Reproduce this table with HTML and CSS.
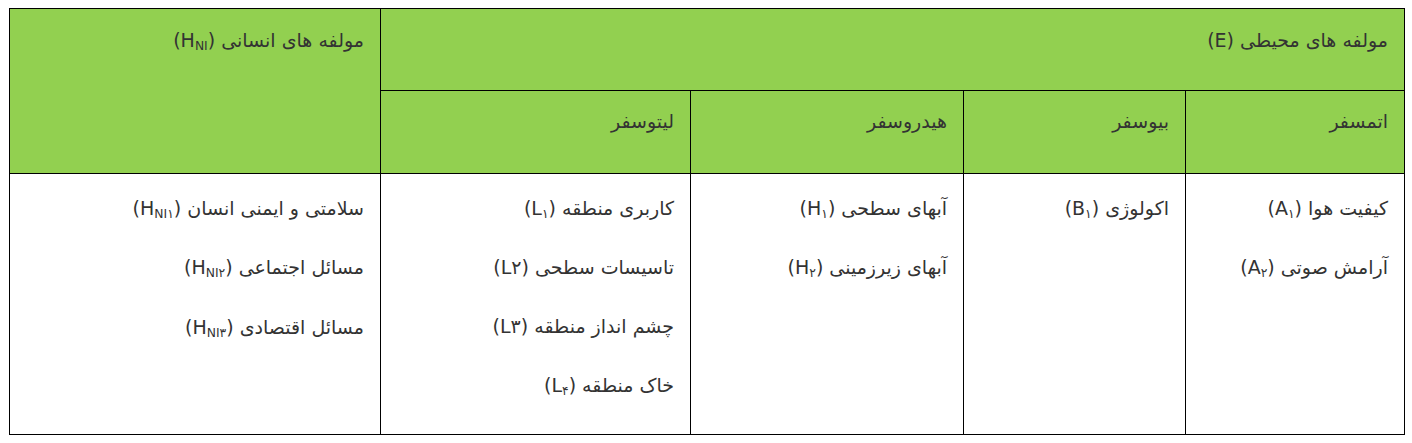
FILE: index.html
```html
<!DOCTYPE html>
<html lang="fa" dir="rtl">
<head>
<meta charset="utf-8">
<link rel="stylesheet" href="styles.css">
</head>
<body>
<table class="grid">
  <colgroup>
    <col class="c-atm"><col class="c-bio"><col class="c-hyd"><col class="c-lit"><col class="c-hum">
  </colgroup>
  <thead>
    <tr class="r1">
      <th colspan="4">مولفه های محیطی (E)</th>
      <th rowspan="2">مولفه های انسانی (H<sub>NI</sub>)</th>
    </tr>
    <tr class="r2">
      <th>اتمسفر</th>
      <th>بیوسفر</th>
      <th>هیدروسفر</th>
      <th>لیتوسفر</th>
    </tr>
  </thead>
  <tbody>
    <tr class="r3">
      <td><div class="list"><span>کیفیت هوا (A<sub>۱</sub>)</span><span>آرامش صوتی (A<sub>۲</sub>)</span></div></td>
      <td><div class="list"><span>اکولوژی (B<sub>۱</sub>)</span></div></td>
      <td><div class="list"><span>آبهای سطحی (H<sub>۱</sub>)</span><span>آبهای زیرزمینی (H<sub>۲</sub>)</span></div></td>
      <td><div class="list"><span>کاربری منطقه (L<sub>۱</sub>)</span><span>تاسیسات سطحی (L۲)</span><span>چشم انداز منطقه (L۳)</span><span>خاک منطقه (L<sub>۴</sub>)</span></div></td>
      <td><div class="list"><span>سلامتی و ایمنی انسان (H<sub>NI۱</sub>)</span><span>مسائل اجتماعی (H<sub>NI۲</sub>)</span><span>مسائل اقتصادی (H<sub>NI۳</sub>)</span></div></td>
    </tr>
  </tbody>
</table>
</body>
</html>
```
FILE: styles.css
```css
html, body {
  margin: 0;
  padding: 0;
  background: #fff;
}
body {
  font-family: "DejaVu Sans", "Noto Sans", sans-serif;
  color: #333;
  font-size: 19px;
}
.grid {
  border-collapse: collapse;
  table-layout: fixed;
  width: 1395px;
  margin: 8px 7px 0 10px;
}
.c-atm { width: 219px; }
.c-bio { width: 222px; }
.c-hyd { width: 273px; }
.c-lit { width: 310px; }
.c-hum { width: 371px; }
th, td {
  border: 1px solid #000;
  text-align: right;
  vertical-align: top;
  padding: 0 16px 0 8px;
  font-weight: normal;
  line-height: 23px;
}
th {
  background: #92d050;
}
.r1 th { height: 82px; box-sizing: border-box; padding-top: 20px; }
.r2 th { height: 83px; box-sizing: border-box; padding-top: 19px; }
.r3 td { height: 261px; box-sizing: border-box; padding-top: 23px; }
.list {
  display: flex;
  flex-direction: column;
  align-items: flex-start;
  gap: 36px;
}
sub {
  font-size: 0.65em;
  line-height: 1;
  vertical-align: -0.25em;
}
```
